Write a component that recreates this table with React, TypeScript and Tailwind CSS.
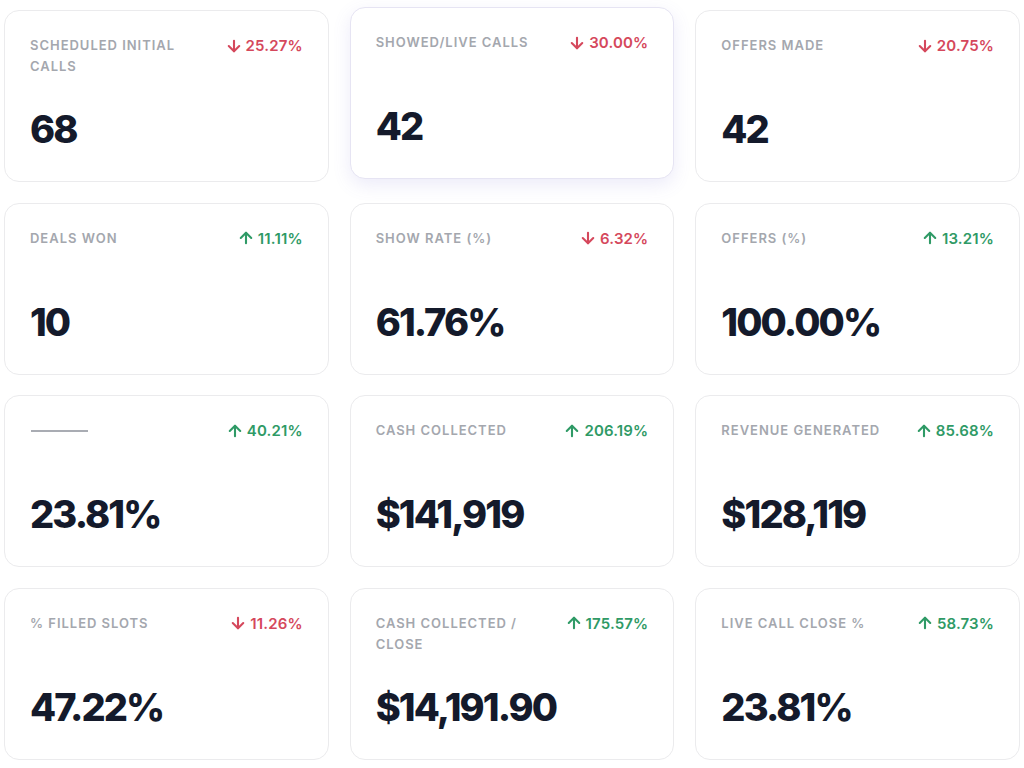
import { ArrowDown, ArrowUp } from "lucide-react";

type Metric = {
  label: string;
  change: string;
  up: boolean;
  value: string;
  active?: boolean;
};

const metrics: Metric[] = [
  { label: "Scheduled initial calls", change: "25.27%", up: false, value: "68" },
  { label: "Showed/live calls", change: "30.00%", up: false, value: "42", active: true },
  { label: "Offers made", change: "20.75%", up: false, value: "42" },
  { label: "Deals won", change: "11.11%", up: true, value: "10" },
  { label: "Show rate (%)", change: "6.32%", up: false, value: "61.76%" },
  { label: "Offers (%)", change: "13.21%", up: true, value: "100.00%" },
  { label: "", change: "40.21%", up: true, value: "23.81%" },
  { label: "Cash collected", change: "206.19%", up: true, value: "$141,919" },
  { label: "Revenue generated", change: "85.68%", up: true, value: "$128,119" },
  { label: "% Filled slots", change: "11.26%", up: false, value: "47.22%" },
  { label: "Cash collected / close", change: "175.57%", up: true, value: "$14,191.90" },
  { label: "Live call close %", change: "58.73%", up: true, value: "23.81%" },
];

function MetricCard({ m }: { m: Metric }) {
  return (
    <div
      className={`flex h-[172px] flex-col justify-between rounded-[15px] border bg-white pb-[33px] pl-[25px] pr-[25px] pt-6 ${
        m.active
          ? "-translate-y-[3px] border-[#e6e4f3] shadow-[0_6px_18px_rgba(110,100,210,0.13)]"
          : "border-[#ebebed]"
      }`}
    >
      <div className="flex items-start justify-between gap-3">
        {m.label ? (
          <p className="max-w-[182px] text-[13px] font-semibold uppercase leading-[21px] tracking-[0.075em] text-[#a4a7ae]">
            {m.label}
          </p>
        ) : (
          <div className="ml-px mt-[10px] h-[1.5px] w-[57px] bg-[#a9acb3]" />
        )}
        <div
          className={`flex shrink-0 items-center gap-[3px] text-[15px] font-semibold leading-[21px] tracking-[0.01em] ${
            m.up ? "text-[#2f9a66]" : "text-[#d5485c]"
          }`}
        >
          {m.up ? (
            <ArrowUp className="h-[18px] w-[18px]" strokeWidth={2.8} />
          ) : (
            <ArrowDown className="h-[18px] w-[18px]" strokeWidth={2.8} />
          )}
          {m.change}
        </div>
      </div>
      <p className="text-[38px] font-extrabold leading-[38px] tracking-[-0.05em] text-[#141a2b]">
        {m.value}
      </p>
    </div>
  );
}

export default function App() {
  return (
    <div
      className="min-h-[768px] w-[1024px] bg-white px-[4px] pt-[10px]"
      style={{ fontFamily: "Inter, 'Noto Sans', sans-serif" }}
    >
      <div className="grid grid-cols-3 gap-x-[21px] gap-y-[20.5px]">
        {metrics.map((m, i) => (
          <MetricCard key={i} m={m} />
        ))}
      </div>
    </div>
  );
}
